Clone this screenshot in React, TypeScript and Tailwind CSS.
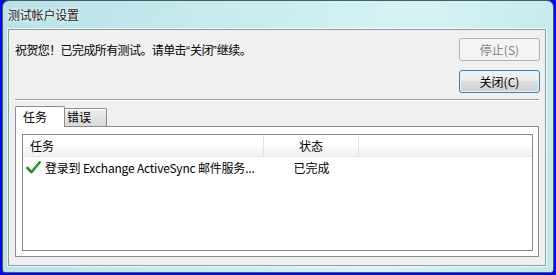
const font = { fontFamily: '"Noto Sans CJK SC", "Liberation Sans", sans-serif' };

function Check() {
  return (
    <svg width="15" height="13" viewBox="0 0 15 13" className="shrink-0">
      <path d="M1.5 7 L5.5 11 L13.5 1.5" fill="none" stroke="#1c7f1c" strokeWidth="2.6" strokeLinecap="round" strokeLinejoin="round" />
      <path d="M2 6.6 L5.5 10.2 L13 1.6" fill="none" stroke="#5cc45c" strokeWidth="0.8" strokeLinecap="round" />
    </svg>
  );
}

export default function App() {
  return (
    <div className="w-[556px] h-[275px] bg-[#0a0ae8] px-[2px] pb-[2px] text-[12px] text-black" style={font}>
      <div className="h-full flex flex-col rounded-t-[7px] rounded-b-[3px] border border-[#4b5a63] bg-[linear-gradient(100deg,#b8e1e7_0%,#cbedf0_45%,#d6f3f3_70%,#c2e8ec_100%)]">
        <div className="h-[28px] flex items-center pl-[5px] text-[12px] tracking-[-0.2px] text-[#1a1a1a] [text-shadow:0_0_6px_#ffffff,0_0_3px_#ffffff]">
          测试帐户设置
        </div>
        <div className="flex-1 ml-[5px] mr-[7px] mb-[6px] flex flex-col border border-[#8d9ba4] bg-[#f0f0f0] shadow-[0_0_0_1px_rgba(255,255,255,0.7)]">
          <div className="flex pl-[6px] pr-[5px] pt-[8px]">
            <div className="flex-1 pt-[4px] leading-[16px] tracking-[-0.6px]">
              祝贺您！已完成所有测试。请单击
              <span className="font-['Liberation_Sans'] tracking-normal">“</span>关闭
              <span className="font-['Liberation_Sans'] tracking-normal">”</span>继续。
            </div>
            <div className="w-[81px] flex flex-col gap-[9px]">
              <div className="h-[23px] flex items-center justify-center rounded-[3px] border border-[#adb2b5] bg-[#f4f4f4] text-[#838383]">
                停止(S)
              </div>
              <div className="h-[23px] flex items-center justify-center rounded-[3px] border border-[#3c7fb1] bg-[linear-gradient(#f2f2f2_0%,#ebebeb_50%,#dddddd_50%,#cfcfcf_100%)] shadow-[inset_0_0_0_1px_#e0f4fc]">
                关闭(C)
              </div>
            </div>
          </div>
          <div className="mt-[6px] mx-[6px] h-[2px] border-t border-t-[#a0a0a0] border-b border-b-white" />
          <div className="mt-[5px] mx-[6px] flex flex-col">
            <div className="h-[20px] flex">
              <div className="relative z-10 self-start h-[21px] w-[50px] pl-[7px] pt-[1px] leading-[18px] bg-white border border-b-0 border-[#898c95] rounded-t-[2px]">
                任务
              </div>
              <div className="self-end h-[18px] w-[42px] pl-[2px] leading-[16px] border border-l-0 border-b-0 border-[#898c95] rounded-tr-[2px] bg-[linear-gradient(#f2f2f2,#e3e3e3_50%,#d9d9d9)] shadow-[inset_0_1px_0_#ffffff]">
                错误
              </div>
            </div>
            <div className="h-[131px] flex flex-col border border-[#898c95] bg-white pt-[7px] pl-[6px] pr-[5px] pb-[5px]">
              <div className="flex-1 flex flex-col border border-[#828790] bg-white">
                <div className="h-[22px] flex border-b border-b-[#e5e5e5] bg-[linear-gradient(#ffffff_0%,#ffffff_55%,#f7f8f9_56%,#f1f2f4_100%)]">
                  <div className="w-[241px] pl-[7px] flex items-center border-r border-r-[#e3e3e3]">任务</div>
                  <div className="w-[95px] flex items-center justify-center border-r border-r-[#e3e3e3]">状态</div>
                  <div className="flex-1" />
                </div>
                <div className="h-[21px] flex items-center">
                  <div className="w-[241px] pl-[3px] flex items-center gap-[4px]">
                    <Check />
                    <span className="whitespace-nowrap tracking-[-0.2px]">登录到 Exchange ActiveSync 邮件服务...</span>
                  </div>
                  <div className="w-[95px] text-center">已完成</div>
                </div>
              </div>
            </div>
          </div>
        </div>
      </div>
    </div>
  );
}
